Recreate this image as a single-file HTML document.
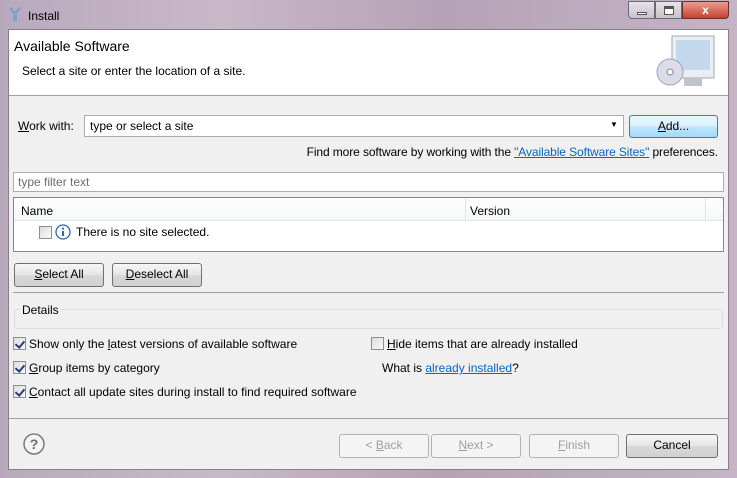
<!DOCTYPE html>
<html><head><style>
*{box-sizing:border-box;margin:0;padding:0}
body{width:737px;height:478px;overflow:hidden;font-family:"Liberation Sans",sans-serif;font-size:12px;color:#000;position:relative;background:linear-gradient(90deg,#b9a9bd,#c8b8c8 30%,#b5a2b6 60%,#c4b4c6);}
.a{position:absolute;white-space:nowrap}
.client{position:absolute;left:8px;top:29px;width:721px;height:441px;background:#f0f0f0;border:1px solid #8a7e8c}
.btn{position:absolute;border:1px solid #707070;border-radius:3px;background:linear-gradient(#f6f6f6,#e5e5e5 50%,#d9d9d9 51%,#d0d0d0);text-align:center;line-height:21px}
.dis{border-color:#adb2b5;color:#a0a0a0;background:#f4f4f4}
.cb{position:absolute;width:13px;height:13px;border:1px solid #8e8f8f;background:linear-gradient(135deg,#dcdcdc,#fafafa)}
.cb.on::after{content:"";position:absolute;left:3px;top:1px;width:4px;height:7px;border:solid #2a3c7a;border-width:0 2px 2px 0;transform:rotate(40deg)}
u{text-decoration:underline}
.lnk{color:#0066cc;text-decoration:underline}
</style></head><body>
<div class="a" style="left:8px;top:6px;width:14px;height:16px"><svg width="14" height="16"><path d="M1 2 L5 8 L9 8 L13 2 L11 1 L7 6 L3 1Z M5 9 h4 v6 h-4z" fill="#7aa0d0"/></svg></div>
<div class="a" style="left:28px;top:9px;font-size:12px">Install</div>
<div class="a" style="left:628px;top:1px;width:27px;height:18px;border:1px solid #6a6a7a;border-radius:0 0 0 4px;background:linear-gradient(#e8e4ea,#c8c2cc)"><div style="position:absolute;left:8px;top:10px;width:10px;height:3px;background:#fff;border:1px solid #555"></div></div>
<div class="a" style="left:655px;top:1px;width:27px;height:18px;border:1px solid #6a6a7a;background:linear-gradient(#e8e4ea,#c8c2cc)"><div style="position:absolute;left:8px;top:4px;width:10px;height:9px;border:1px solid #555;border-top-width:3px;background:#fff"></div></div>
<div class="a" style="left:682px;top:1px;width:47px;height:18px;border:1px solid #6a3030;border-radius:0 0 4px 0;background:linear-gradient(#e8a090,#c84030);color:#fff;font-weight:bold;text-align:center;line-height:16px">x</div>
<div class="client"></div>
<div class="a" style="left:9px;top:30px;width:719px;height:66px;background:#fff;border-bottom:1px solid #a0a0a0"></div>
<div class="a" style="left:14px;top:38px;font-size:14px">Available Software</div>
<div class="a" style="left:22px;top:64px">Select a site or enter the location of a site.</div>
<div class="a" style="left:656px;top:34px"><svg width="62" height="60"><rect x="16" y="2" width="42" height="42" fill="#e8eef4" stroke="#a0a8b0"/><rect x="20" y="6" width="34" height="30" fill="#c4d8ec"/><rect x="28" y="44" width="18" height="8" fill="#c0c4c8"/><circle cx="14" cy="38" r="13" fill="#dcdce8" stroke="#a0a0b0"/><circle cx="14" cy="38" r="3" fill="#fff" stroke="#888"/></svg></div>
<div class="a" style="left:18px;top:119px"><u>W</u>ork with:</div>
<div class="a" style="left:84px;top:115px;width:540px;height:22px;background:#fff;border:1px solid #abadb3"></div>
<div class="a" style="left:90px;top:119px">type or select a site</div>
<div class="a" style="left:610px;top:120px;font-size:8px">▼</div>
<div class="btn" style="left:629px;top:115px;width:89px;height:23px;border-color:#3c7fb1;background:linear-gradient(#eaf6fd,#d9f0fc 50%,#bee6fd 51%,#a7d9f5)"><u>A</u>dd...</div>
<div class="a" style="right:19px;top:145px;letter-spacing:-0.1px">Find more software by working with the <span class="lnk">"Available Software Sites"</span> preferences.</div>
<div class="a" style="left:13px;top:172px;width:711px;height:20px;background:#fff;border:1px solid #abadb3"></div>
<div class="a" style="left:18px;top:175px;color:#6d6d6d">type filter text</div>
<div class="a" style="left:13px;top:197px;width:711px;height:55px;background:#fff;border:1px solid #828790"></div>
<div class="a" style="left:14px;top:198px;width:709px;height:23px;background:linear-gradient(#fff,#f6f7f8);border-bottom:1px solid #e0e2e5"></div>
<div class="a" style="left:465px;top:198px;width:1px;height:23px;background:#e0e2e5"></div>
<div class="a" style="left:705px;top:198px;width:1px;height:23px;background:#e0e2e5"></div>
<div class="a" style="left:21px;top:204px">Name</div>
<div class="a" style="left:470px;top:204px">Version</div>
<div class="cb" style="left:39px;top:226px"></div>
<div class="a" style="left:55px;top:224px"><svg width="16" height="16"><circle cx="8" cy="8" r="7" fill="#fff" stroke="#2c68b0" stroke-width="1.3"/><rect x="7" y="7" width="2" height="5" fill="#2c68b0"/><circle cx="8" cy="4.6" r="1.1" fill="#2c68b0"/></svg></div>
<div class="a" style="left:76px;top:225px">There is no site selected.</div>
<div class="btn" style="left:14px;top:263px;width:90px;height:24px"><u>S</u>elect All</div>
<div class="btn" style="left:112px;top:263px;width:90px;height:24px"><u>D</u>eselect All</div>
<div class="a" style="left:13px;top:292px;width:711px;height:1px;background:#a0a0a0"></div>
<div class="a" style="left:14px;top:309px;width:709px;height:20px;border:1px solid #d5dfe5;border-radius:3px"></div>
<div class="a" style="left:20px;top:303px;background:#f0f0f0;padding:0 2px">Details</div>
<div class="cb on" style="left:13px;top:337px"></div>
<div class="a" style="left:29px;top:337px">Show only the <u>l</u>atest versions of available software</div>
<div class="cb on" style="left:13px;top:361px"></div>
<div class="a" style="left:29px;top:361px"><u>G</u>roup items by category</div>
<div class="cb on" style="left:13px;top:385px"></div>
<div class="a" style="left:29px;top:385px"><u>C</u>ontact all update sites during install to find required software</div>
<div class="cb" style="left:371px;top:337px"></div>
<div class="a" style="left:387px;top:337px"><u>H</u>ide items that are already installed</div>
<div class="a" style="left:382px;top:361px">What is <span class="lnk">already installed</span>?</div>
<div class="a" style="left:9px;top:418px;width:719px;height:1px;background:#a0a0a0"></div>
<div class="a" style="left:23px;top:433px"><svg width="22" height="22"><circle cx="11" cy="11" r="10" fill="#f4f4f4" stroke="#7a7a7a" stroke-width="1.5"/><text x="11" y="16" text-anchor="middle" font-family="Liberation Sans" font-size="14" font-weight="bold" fill="#6a6a6a">?</text></svg></div>
<div class="btn dis" style="left:339px;top:434px;width:90px;height:24px">&lt; <u>B</u>ack</div>
<div class="btn dis" style="left:431px;top:434px;width:90px;height:24px"><u>N</u>ext &gt;</div>
<div class="btn dis" style="left:529px;top:434px;width:90px;height:24px"><u>F</u>inish</div>
<div class="btn" style="left:626px;top:434px;width:92px;height:24px">Cancel</div>
</body></html>
